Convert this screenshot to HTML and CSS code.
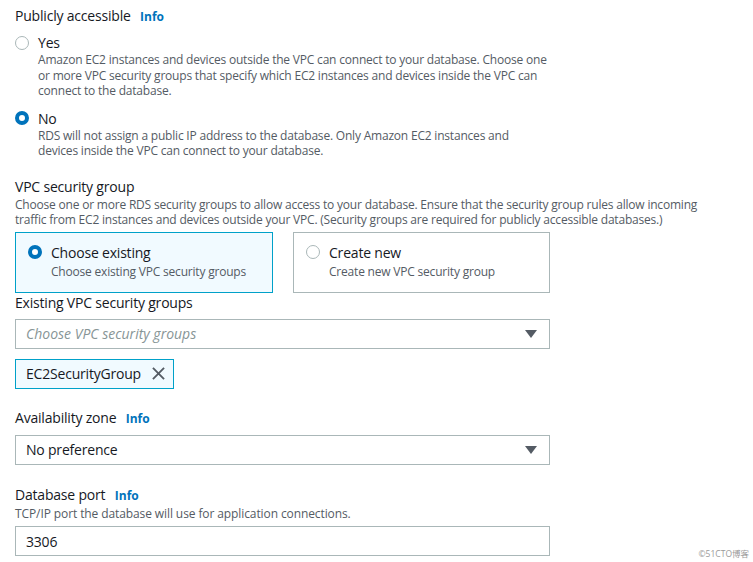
FILE: index.html
```html
<!DOCTYPE html>
<html>
<head>
<meta charset="utf-8">
<link rel="stylesheet" href="styles.css">
</head>
<body>
<div class="page">
  <div class="title">Publicly accessible <span class="info">Info</span></div>
  <div class="options">
    <div class="option">
      <div class="opt-row"><span class="radio"></span><span class="opt-label">Yes</span></div>
      <div class="opt-desc">Amazon EC2 instances and devices outside the VPC can connect to your database. Choose one<br>or more VPC security groups that specify which EC2 instances and devices inside the VPC can<br>connect to the database.</div>
    </div>
    <div class="option">
      <div class="opt-row"><span class="radio checked"></span><span class="opt-label">No</span></div>
      <div class="opt-desc">RDS will not assign a public IP address to the database. Only Amazon EC2 instances and<br>devices inside the VPC can connect to your database.</div>
    </div>
  </div>

  <div class="title t-vpc">VPC security group</div>
  <div class="desc">Choose one or more RDS security groups to allow access to your database. Ensure that the security group rules allow incoming<br>traffic from EC2 instances and devices outside your VPC. (Security groups are required for publicly accessible databases.)</div>
  <div class="cards">
    <div class="card selected">
      <div class="card-row"><span class="radio checked"></span><span class="opt-label">Choose existing</span></div>
      <div class="card-desc">Choose existing VPC security groups</div>
    </div>
    <div class="card">
      <div class="card-row"><span class="radio"></span><span class="opt-label">Create new</span></div>
      <div class="card-desc">Create new VPC security group</div>
    </div>
  </div>

  <div class="title">Existing VPC security groups</div>
  <div class="select field">
    <span class="placeholder">Choose VPC security groups</span>
    <span class="caret"></span>
  </div>
  <div class="token">
    <span>EC2SecurityGroup</span>
    <svg class="x" width="13" height="13" viewBox="0 0 14 14"><path d="M1 1 L13 13 M13 1 L1 13" stroke="#545b64" stroke-width="2" fill="none"/></svg>
  </div>

  <div class="title t-az">Availability zone <span class="info">Info</span></div>
  <div class="select field">
    <span class="value">No preference</span>
    <span class="caret"></span>
  </div>

  <div class="title t-port">Database port <span class="info">Info</span></div>
  <div class="desc port-desc">TCP/IP port the database will use for application connections.</div>
  <div class="input field"><span class="value">3306</span></div>
</div>
<div class="watermark">©51CTO博客</div>
</body>
</html>
```
FILE: styles.css
```css
html, body {
  margin: 0;
  padding: 0;
  background: #ffffff;
}
body {
  font-family: "Open Sans", "Noto Sans", "Noto Sans CJK SC", sans-serif;
  color: #16191f;
  width: 753px;
  height: 562px;
  overflow: hidden;
  position: relative;
}
.page {
  padding: 6px 0 0 15px;
}
.title {
  font-size: 14px;
  letter-spacing: -0.2px;
  line-height: 20px;
  color: #16191f;
}
.info {
  font-size: 12px;
  letter-spacing: 0;
  font-weight: 700;
  color: #0073bb;
  margin-left: 6px;
}
.options {
  margin-top: 6px;
  display: flex;
  flex-direction: column;
  gap: 10px;
}
.opt-row, .card-row {
  display: flex;
  align-items: center;
  gap: 9px;
  height: 19px;
}
.opt-label {
  font-size: 14px;
  letter-spacing: -0.2px;
  line-height: 19px;
}
.opt-desc {
  margin-left: 23px;
  font-size: 12px;
  letter-spacing: -0.2px;
  line-height: 15.5px;
  color: #545b64;
}
.radio {
  box-sizing: border-box;
  width: 14px;
  height: 14px;
  border-radius: 50%;
  border: 1.5px solid #aab7b8;
  background: #fff;
  flex: none;
}
.radio.checked {
  border: 4px solid #0073bb;
}
.t-vpc {
  margin-top: 18px;
}
.desc {
  font-size: 12px;
  letter-spacing: -0.2px;
  line-height: 15.5px;
  color: #545b64;
}
.port-desc {
  letter-spacing: -0.1px;
}
.cards {
  display: flex;
  gap: 20px;
  margin-top: 4px;
}
.card {
  box-sizing: border-box;
  width: 257px;
  height: 61px;
  border: 1px solid #aab7b8;
  padding: 10px 12px 0 12px;
  background: #fff;
}
.card.selected {
  width: 258px;
  border-color: #00a1c9;
  background: #f1faff;
}
.card-desc {
  margin-left: 23px;
  margin-top: 2px;
  font-size: 12px;
  letter-spacing: -0.2px;
  line-height: 15px;
  color: #545b64;
}
.field {
  box-sizing: border-box;
  width: 535px;
  height: 30px;
  border: 1px solid #aab7b8;
  display: flex;
  align-items: center;
  justify-content: space-between;
  padding: 0 12px 0 10px;
  margin-top: 6px;
}
.placeholder {
  font-style: italic;
  font-size: 14px;
  letter-spacing: 0;
  color: #879596;
}
.value {
  font-size: 14px;
  letter-spacing: -0.2px;
  color: #16191f;
}
.caret {
  width: 0;
  height: 0;
  border-left: 6px solid transparent;
  border-right: 6px solid transparent;
  border-top: 8px solid #545b64;
}
.token {
  box-sizing: border-box;
  width: 159px;
  height: 30px;
  margin-top: 10px;
  border: 1px solid #00a1c9;
  background: #f1faff;
  display: flex;
  align-items: center;
  justify-content: space-between;
  padding: 0 8px 0 10px;
  font-size: 14px;
  letter-spacing: -0.2px;
  color: #16191f;
}
.t-az {
  margin-top: 19px;
}
.t-port {
  margin-top: 20px;
}
.input {
  margin-top: 5px;
}
.watermark {
  position: absolute;
  right: 4px;
  bottom: 3px;
  font-size: 8.5px;
  color: #9a9a9a;
}
```
